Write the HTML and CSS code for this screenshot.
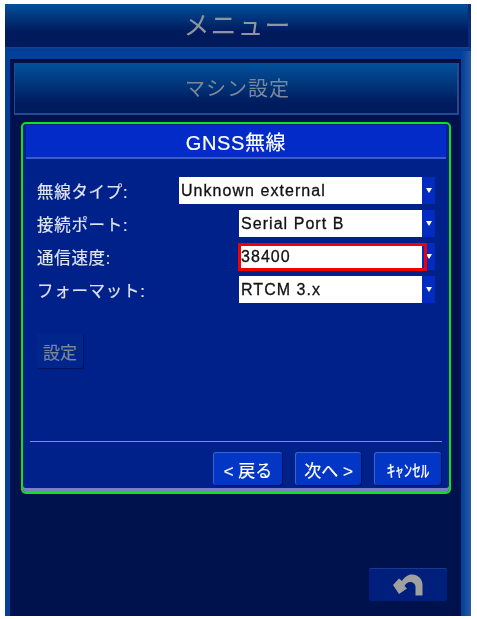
FILE: index.html
```html
<!DOCTYPE html>
<html lang="ja">
<head>
<meta charset="UTF-8">
<meta name="viewport" content="width=device-width, initial-scale=1.0">
<title>GNSS無線</title>
<link rel="stylesheet" href="styles.css">
</head>
<body>

<div class="screen">
  <div class="top-bar">メニュー</div>

  <div class="outer">
    <div class="inner">
      <div class="sub-bar">マシン設定</div>

      <div class="panel">
        <div class="panel-title">GNSS無線</div>

        <div class="panel-body">
          <div class="rows">
            <div class="row">
              <span class="label">無線タイプ:</span>
              <div class="select select-wide">
                <span class="select-value">Unknown external</span>
                <span class="select-arrow"></span>
              </div>
            </div>
            <div class="row">
              <span class="label">接続ポート:</span>
              <div class="select">
                <span class="select-value">Serial Port B</span>
                <span class="select-arrow"></span>
              </div>
            </div>
            <div class="row">
              <span class="label">通信速度:</span>
              <div class="select">
                <span class="select-value highlighted">38400</span>
                <span class="select-arrow"></span>
              </div>
            </div>
            <div class="row">
              <span class="label">フォーマット:</span>
              <div class="select">
                <span class="select-value">RTCM 3.x</span>
                <span class="select-arrow"></span>
              </div>
            </div>
          </div>

          <div class="set-button">設定</div>
        </div>

        <div class="panel-footer">
          <div class="button btn-back">&lt; 戻る</div>
          <div class="button btn-next">次へ &gt;</div>
          <div class="button btn-cancel">ｷｬﾝｾﾙ</div>
        </div>
      </div>

      <div class="bottom">
        <div class="return-button">
          <svg width="30" height="24" viewBox="0 0 30 24">
            <path d="M0 12 L6 5.5 L9 8 C12 3 16 1.5 19 1.5 C25 1.5 29.5 6 29.5 12 L29.5 22.5 L22.5 22.5 L22.5 14 C22.5 11 20 9 17 9 C15 9 13 10.5 11.5 13 L14 15.5 L6 21 Z" fill="#a0a0a0"/>
          </svg>
        </div>
      </div>
    </div>
  </div>
</div>

</body>
</html>
```

FILE: styles.css
```css
body {
  margin: 0;
  background-color: white;
  font-family: "Liberation Sans", "Noto Sans CJK JP", sans-serif;
}
.screen {
  width: 466px;
  height: 612px;
  margin: 4px 0 0 5px;
  background-color: #02409a;
  display: flex;
  flex-direction: column;
  filter: blur(0.35px);
}
.top-bar {
  height: 39px;
  flex: none;
  display: flex;
  align-items: center;
  justify-content: center;
  padding: 0 0 4px 2px;
  font-size: 26px;
  letter-spacing: 1px;
  color: #8f969f;
  background: linear-gradient(#02509a, #001a5c 65%, #001a5c);
  border-bottom: 1px solid #1d3f8c;
  border-right: 3px solid #0a2c78;
  margin-bottom: -2px;
}
.outer {
  flex: 1;
  display: flex;
  margin-top: 4px;
  padding-left: 5px;
  border-top: 1px solid #0a3a90;
  background: linear-gradient(90deg, #02409a 0, #02409a 98%, #2a5aa6 100%);
}
.inner {
  width: 451px;
  margin-top: 8px;
  background-color: #00124e;
  border-top: 2px solid #000c3c;
  box-sizing: border-box;
  padding: 2px 2px 0 4px;
  display: flex;
  flex-direction: column;
}
.sub-bar {
  height: 48px;
  flex: none;
  display: flex;
  align-items: center;
  justify-content: center;
  padding-left: 3px;
  padding-bottom: 2px;
  font-size: 20px;
  letter-spacing: 1px;
  color: #7d8896;
  background: linear-gradient(#02529c, #001c5e 80%);
  border: 1px solid #26488f;
  border-width: 0 2px 2px 1px;
}
.panel {
  margin: 7px 8px 0 7px;
  height: 372px;
  flex: none;
  box-sizing: border-box;
  border: 2px solid #10e020;
  border-radius: 5px;
  background-color: #00218a;
  display: flex;
  flex-direction: column;
  box-shadow: inset 0 -4px 0 #7c80c4;
}
.panel-title {
  height: 32px;
  margin: 1px 3px 0;
  flex: none;
  display: flex;
  align-items: center;
  justify-content: center;
  font-size: 20px;
  letter-spacing: 0.6px;
  color: white;
  -webkit-text-stroke: 0.2px white;
  background-color: #022bc8;
  border-bottom: 2px solid #3a5ccc;
}
.panel-body {
  flex: 1;
  padding: 18px 14px 0 14px;
  color: #e8ecf4;
}
.rows {
  display: flex;
  flex-direction: column;
  gap: 6px;
}
.row {
  height: 27px;
  display: flex;
  align-items: center;
  justify-content: space-between;
}
.label {
  font-size: 16.5px;
  letter-spacing: 0.7px;
  color: #dfe4ee;
  -webkit-text-stroke: 0.2px #dfe4ee;
}
.select {
  width: 196px;
  height: 27px;
  display: flex;
}
.select-wide {
  width: 256px;
}
.select-value {
  flex: 1;
  display: flex;
  align-items: center;
  padding-left: 2px;
  background-color: white;
  color: #111;
  font-size: 16px;
  letter-spacing: 1.05px;
  -webkit-text-stroke: 0.3px #111;
}
.select-arrow {
  width: 13px;
  flex: none;
  background-color: #022bc0;
  position: relative;
}
.select-arrow::after {
  content: "";
  position: absolute;
  left: 4px;
  top: 11px;
  border-left: 3px solid transparent;
  border-right: 3px solid transparent;
  border-top: 5px solid white;
}
.highlighted {
  position: relative;
}
.highlighted::after {
  content: "";
  position: absolute;
  z-index: 1;
  left: -1px;
  top: 0;
  right: -5px;
  bottom: -1px;
  border: 3px solid #f00000;
}
.set-button {
  width: 46px;
  height: 34px;
  margin-top: 31px;
  display: flex;
  align-items: center;
  justify-content: center;
  font-size: 17px;
  color: #7b8698;
  -webkit-text-stroke: 0.2px #7b8698;
  background-color: #00268c;
  border-radius: 2px;
  box-shadow: 1px 1px 1px #001358;
}
.panel-footer {
  flex: none;
  height: 48px;
  margin: 0 7px 3px 7px;
  padding-top: 10px;
  box-sizing: border-box;
  border-top: 1px solid #7f8fc4;
  display: flex;
  justify-content: flex-end;
  gap: 13px;
}
.button {
  height: 33px;
  display: flex;
  align-items: center;
  justify-content: center;
  font-size: 17px;
  color: white;
  -webkit-text-stroke: 0.2px white;
  background-color: #0336c4;
  border-top: 1px solid #3a62d0;
  border-left: 1px solid #3a62d0;
  border-radius: 3px;
  box-sizing: border-box;
  box-shadow: 1px 1px 1px #00135a;
}
.btn-back {
  width: 69px;
}
.btn-next {
  width: 66px;
}
.btn-cancel {
  width: 67px;
  margin-right: 1px;
}
.bottom {
  flex: 1;
  display: flex;
  justify-content: flex-end;
  padding: 74px 12px 0 0;
}
.return-button {
  width: 78px;
  height: 33px;
  display: flex;
  align-items: center;
  justify-content: center;
  background-color: #001f7c;
  border-top: 1px solid #1c3a8c;
  border-radius: 2px;
  box-sizing: border-box;
}
```
